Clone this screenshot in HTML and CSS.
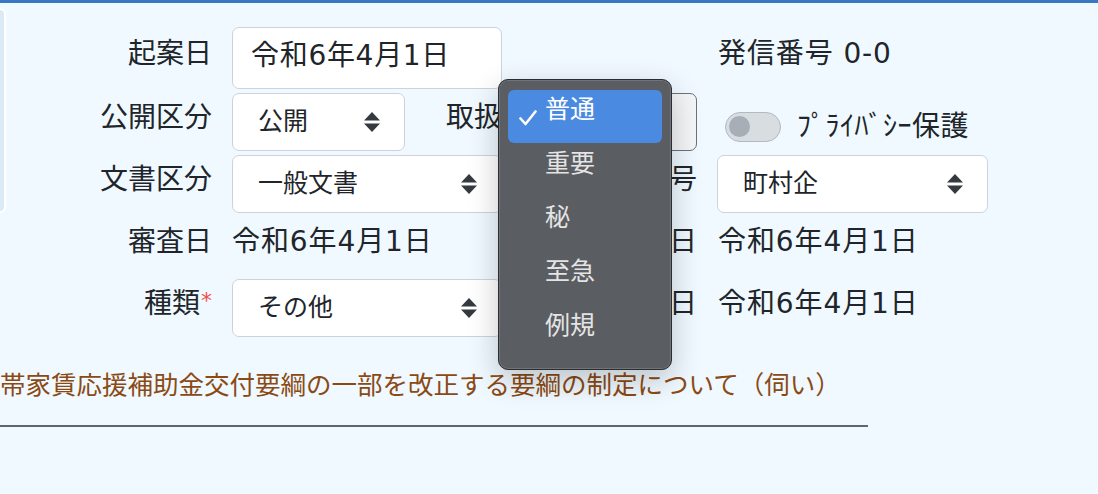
FILE: index.html
```html
<!DOCTYPE html>
<html lang="ja">
<head>
<meta charset="utf-8">
<title>起案</title>
<link rel="stylesheet" href="styles.css">
</head>
<body>
<div class="topbar"></div>
<div class="page">
  <div class="upper">
    <div class="sidecard"></div>
    <div class="form">
      <!-- row 1 -->
      <div class="lbl r1">起案日</div>
      <div class="c2 r1"><div class="input">令和6年4月1日</div></div>
      <div class="c3 r1"></div>
      <div class="c4 r1 text">発信番号 0-0</div>
      <!-- row 2 -->
      <div class="lbl r2">公開区分</div>
      <div class="c23 r2">
        <div class="select sel-short"><span>公開</span><svg class="arrow" viewBox="0 0 16 20" width="16" height="20"><path d="M0 8.5 L8 0 L16 8.5 Z M0 11.5 L8 20 L16 11.5 Z" fill="#343a40"/></svg></div>
        <div class="lbl-inline">取扱</div>
        <div class="select sel-open"><span>普通</span></div>
      </div>
      <div class="c4 r2 switch-row">
        <span class="switch"><span class="knob"></span></span>
        <span class="switch-label">ﾌﾟﾗｲﾊﾞｼｰ保護</span>
      </div>
      <!-- row 3 -->
      <div class="lbl r3">文書区分</div>
      <div class="c2 r3"><div class="select"><span>一般文書</span><svg class="arrow" viewBox="0 0 16 20" width="16" height="20"><path d="M0 8.5 L8 0 L16 8.5 Z M0 11.5 L8 20 L16 11.5 Z" fill="#343a40"/></svg></div></div>
      <div class="lbl c3 r3">文書番号</div>
      <div class="c4 r3"><div class="select"><span>町村企</span><svg class="arrow" viewBox="0 0 16 20" width="16" height="20"><path d="M0 8.5 L8 0 L16 8.5 Z M0 11.5 L8 20 L16 11.5 Z" fill="#343a40"/></svg></div></div>
      <!-- row 4 -->
      <div class="lbl r4">審査日</div>
      <div class="c2 r4 text">令和6年4月1日</div>
      <div class="lbl c3 r4">決裁日</div>
      <div class="c4 r4 text">令和6年4月1日</div>
      <!-- row 5 -->
      <div class="lbl r5">種類<span class="req">*</span></div>
      <div class="c2 r5"><div class="select"><span>その他</span><svg class="arrow" viewBox="0 0 16 20" width="16" height="20"><path d="M0 8.5 L8 0 L16 8.5 Z M0 11.5 L8 20 L16 11.5 Z" fill="#343a40"/></svg></div></div>
      <div class="lbl c3 r5">施行日</div>
      <div class="c4 r5 text">令和6年4月1日</div>
    </div>
  </div>
  <div class="title">帯家賃応援補助金交付要綱の一部を改正する要綱の制定について（伺い）</div>
  <div class="rule"></div>
</div>

<div class="menu">
  <div class="item selected"><svg class="check" viewBox="0 0 18 16" width="18" height="16"><path d="M1.5 8.5 L6.5 14 L16.5 1.5" fill="none" stroke="#fff" stroke-width="2.6" stroke-linecap="round" stroke-linejoin="round"/></svg><span>普通</span></div>
  <div class="item"><span>重要</span></div>
  <div class="item"><span>秘</span></div>
  <div class="item"><span>至急</span></div>
  <div class="item"><span>例規</span></div>
</div>
</body>
</html>
```

FILE: styles.css
```css
* { box-sizing: border-box; }
html, body {
  margin: 0;
  padding: 0;
}
body {
  width: 1098px;
  height: 494px;
  overflow: hidden;
  background: #eff9ff;
  font-family: "DejaVu Sans", "Noto Sans CJK JP", sans-serif;
  color: #212529;
  position: relative;
}
.topbar {
  height: 3px;
  background: #3b78c2;
}
.page {
  display: flex;
  flex-direction: column;
}
.upper {
  display: flex;
  align-items: flex-start;
}
.sidecard {
  width: 6px;
  height: 205px;
  margin-top: 5px;
  background: #dbeaf6;
  border: 2px solid #ffffff;
  border-left: none;
  border-radius: 0 8px 8px 0;
  flex: none;
}
.form {
  display: grid;
  grid-template-columns: 206px 270px 175px 271px;
  grid-template-rows: 62px 58px 58px 58px 58px;
  column-gap: 20px;
  row-gap: 4px;
  padding-top: 24px;
}
.r1 { grid-row: 1; }
.r2 { grid-row: 2; }
.r3 { grid-row: 3; }
.r4 { grid-row: 4; }
.r5 { grid-row: 5; }
.lbl { grid-column: 1; }
.c2 { grid-column: 2; }
.c3 { grid-column: 3; }
.c23 { grid-column: 2 / 4; }
.c4 { grid-column: 4; }

.lbl {
  font-size: 28px;
  line-height: 1;
  text-align: right;
  align-self: center;
  padding-bottom: 8px;
  white-space: nowrap;
}
.req {
  color: #f0504a;
  font-size: 22px;
  vertical-align: 5px;
  margin-left: 1px;
}
.text {
  font-size: 28px;
  line-height: 1;
  align-self: center;
  padding-bottom: 8px;
  white-space: nowrap;
  letter-spacing: 0.9px;
}
.c4.text { padding-left: 1px; }
.input {
  height: 62px;
  width: 270px;
  background: #fff;
  border: 1px solid #ccd3da;
  border-radius: 7px;
  font-size: 28px;
  line-height: 1;
  padding: 0 18px 4px 18px;
  letter-spacing: 0.7px;
  display: flex;
  align-items: center;
}
.select {
  height: 58px;
  width: 100%;
  background: #fff;
  border: 1px solid #ccd3da;
  border-radius: 7px;
  font-size: 25px;
  line-height: 1;
  padding: 0 24px 0 25px;
  display: flex;
  align-items: center;
  justify-content: space-between;
}
.select span { padding-bottom: 2px; }
.arrow { flex: none; }
.c23 {
  display: flex;
  align-items: center;
}
.sel-short {
  width: 173px;
  flex: none;
}
.lbl-inline {
  font-size: 28px;
  line-height: 1;
  margin-left: 41px;
  margin-right: 16px;
  padding-bottom: 8px;
  white-space: nowrap;
}
.sel-open {
  flex: 1;
  background: #f4f5f7;
  border-color: #6d7278;
}
.switch-row {
  display: flex;
  align-items: center;
  padding-top: 9px;
  padding-left: 8px;
}
.switch {
  width: 56px;
  height: 30px;
  border-radius: 15px;
  background: #d8dde2;
  border: 1.5px solid #b3b9bf;
  display: flex;
  align-items: center;
  padding-left: 3px;
  flex: none;
}
.knob {
  width: 21px;
  height: 21px;
  border-radius: 50%;
  background: #a7aeb5;
}
.switch-label {
  font-size: 28px;
  line-height: 1;
  margin-left: 16px;
  padding-bottom: 0;
  white-space: nowrap;
  letter-spacing: 0.5px;
}
.title {
  margin-top: 30px;
  font-size: 25.5px;
  line-height: 36px;
  color: #8b4a14;
  white-space: nowrap;
}
.rule {
  margin-top: 22px;
  width: 868px;
  height: 2px;
  background: #5f676b;
}

/* native-like dropdown menu */
.menu {
  position: absolute;
  left: 498px;
  top: 79px;
  width: 174px;
  height: 291px;
  background: #5a5d62;
  border: 1px solid #2c2d30;
  border-radius: 10px;
  box-shadow: inset 0 0 0 1px #707378, 0 10px 30px rgba(0, 0, 0, 0.22);
  padding: 10px 9px;
  display: flex;
  flex-direction: column;
}
.item {
  height: 54px;
  flex: none;
  display: flex;
  align-items: center;
  padding-left: 37px;
  font-size: 25px;
  line-height: 1;
  color: #e4e4e4;
  border-radius: 6px;
  position: relative;
}
.item span { padding-bottom: 14px; }
.item.selected {
  height: 53px;
  background: #4a8ae0;
  color: #ffffff;
}
.check {
  position: absolute;
  left: 11px;
  top: 20px;
}
```
